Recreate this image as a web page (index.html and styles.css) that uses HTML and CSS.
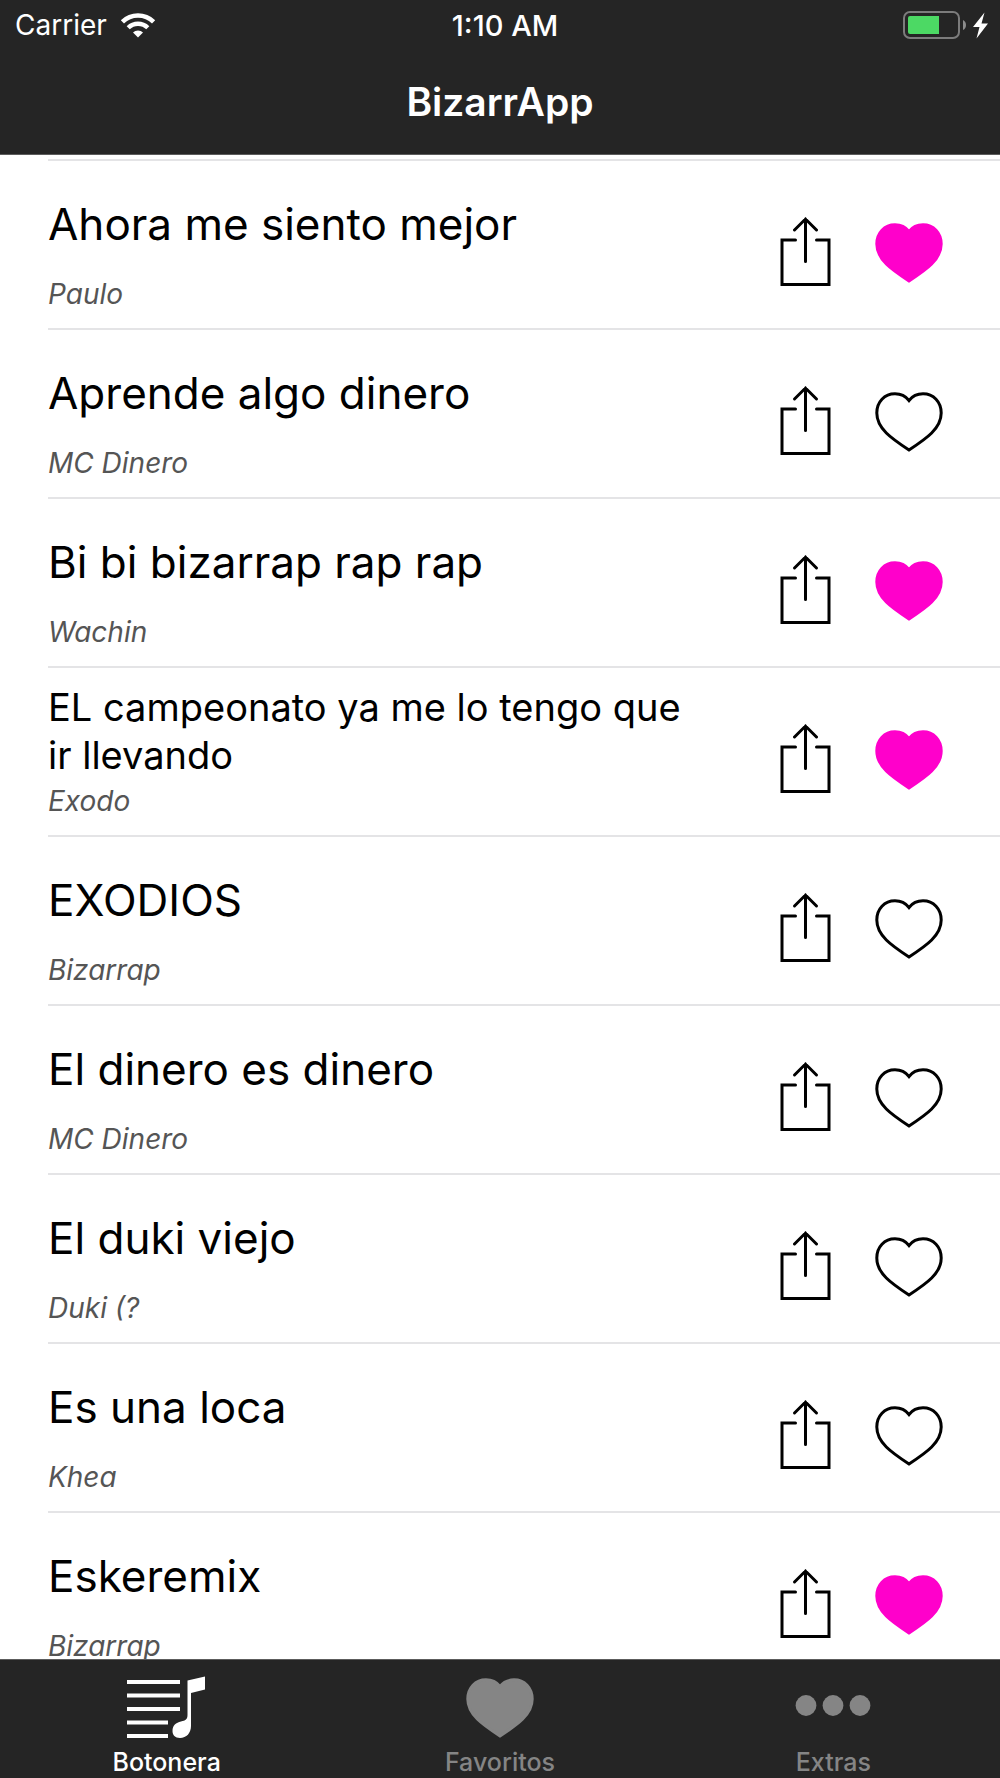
FILE: index.html
```html
<!DOCTYPE html>
<html lang="es">
<head>
<meta charset="utf-8">
<meta name="viewport" content="width=device-width, initial-scale=1">
<title>BizarrApp</title>
<link rel="stylesheet" href="styles.css">
</head>
<body>
<svg class="symbols" aria-hidden="true">
  <symbol id="share" viewBox="0 0 52 70">
    <path d="M15.500 24H2V68.500H49V24H36.500" fill="none" stroke="currentColor" stroke-width="3" stroke-linecap="round"/>
    <path d="M25.500 45.500V3M14.500 14L25.500 3L36.500 14" fill="none" stroke="currentColor" stroke-width="3" stroke-linecap="round"/>
  </symbol>
  <symbol id="heart" viewBox="0 0 70 70">
    <path d="M35 15.500C31.500 11 26.500 8.800 21 8.800C10.500 8.800 2.800 17 2.800 28C2.800 43.500 17.500 53.500 35 65C52.500 53.500 67.200 43.500 67.200 28C67.200 17 59.500 8.800 49 8.800C43.500 8.800 38.500 11 35 15.500Z" stroke="currentColor" stroke-width="3"/>
  </symbol>
</svg>
<div class="app">
  <header class="top">
    <div class="status">
      <div class="network">
        <span>Carrier</span>
        <svg width="36" height="26" viewBox="0 0 36 26" aria-hidden="true">
          <path d="M18 25.500L13 20.500A7 7 0 0 1 23 20.500Z" fill="#fff"/>
          <path d="M8.200 15.800A14 14 0 0 1 27.800 15.800" fill="none" stroke="#fff" stroke-width="4.400"/>
          <path d="M2.400 9.800A22.500 22.500 0 0 1 33.600 9.800" fill="none" stroke="#fff" stroke-width="4.600"/>
        </svg>
      </div>
      <time class="clock">1:10 AM</time>
      <svg class="power" width="86" height="28" viewBox="0 0 86 28" role="img" aria-label="Batería cargando">
        <rect x="1" y="1" width="55" height="26" rx="6" fill="none" stroke="#7c7c7c" stroke-width="2"/>
        <path d="M7 5H36V23H7Q5 23 5 21V7Q5 5 7 5Z" fill="#4cd964"/>
        <path d="M60 9Q63 10.500 63 14T60 19Z" fill="#8c8c8c"/>
        <path d="M81.500 1.500L70 16H76.500L73.500 27.500L85 12.500H78.500Z" fill="#fff"/>
      </svg>
    </div>
    <h1 class="heading">BizarrApp</h1>
  </header>

  <main class="content">
    <ul class="list">
      <li class="row">
        <div class="text"><div class="titlebox"><h2 class="title">Ahora me siento mejor</h2></div><p class="artist">Paulo</p></div>
        <div class="actions">
          <button class="share" aria-label="Compartir"><svg><use href="#share"/></svg></button>
          <button class="like on" aria-label="Favorito" aria-pressed="true"><svg><use href="#heart"/></svg></button>
        </div>
      </li>
      <li class="row">
        <div class="text"><div class="titlebox"><h2 class="title">Aprende algo dinero</h2></div><p class="artist">MC Dinero</p></div>
        <div class="actions">
          <button class="share" aria-label="Compartir"><svg><use href="#share"/></svg></button>
          <button class="like" aria-label="Favorito" aria-pressed="false"><svg><use href="#heart"/></svg></button>
        </div>
      </li>
      <li class="row">
        <div class="text"><div class="titlebox"><h2 class="title">Bi bi bizarrap rap rap</h2></div><p class="artist">Wachin</p></div>
        <div class="actions">
          <button class="share" aria-label="Compartir"><svg><use href="#share"/></svg></button>
          <button class="like on" aria-label="Favorito" aria-pressed="true"><svg><use href="#heart"/></svg></button>
        </div>
      </li>
      <li class="row">
        <div class="text"><div class="titlebox"><h2 class="title long">EL campeonato ya me lo tengo que ir llevando</h2></div><p class="artist">Exodo</p></div>
        <div class="actions">
          <button class="share" aria-label="Compartir"><svg><use href="#share"/></svg></button>
          <button class="like on" aria-label="Favorito" aria-pressed="true"><svg><use href="#heart"/></svg></button>
        </div>
      </li>
      <li class="row">
        <div class="text"><div class="titlebox"><h2 class="title">EXODIOS</h2></div><p class="artist">Bizarrap</p></div>
        <div class="actions">
          <button class="share" aria-label="Compartir"><svg><use href="#share"/></svg></button>
          <button class="like" aria-label="Favorito" aria-pressed="false"><svg><use href="#heart"/></svg></button>
        </div>
      </li>
      <li class="row">
        <div class="text"><div class="titlebox"><h2 class="title">El dinero es dinero</h2></div><p class="artist">MC Dinero</p></div>
        <div class="actions">
          <button class="share" aria-label="Compartir"><svg><use href="#share"/></svg></button>
          <button class="like" aria-label="Favorito" aria-pressed="false"><svg><use href="#heart"/></svg></button>
        </div>
      </li>
      <li class="row">
        <div class="text"><div class="titlebox"><h2 class="title">El duki viejo</h2></div><p class="artist">Duki (?</p></div>
        <div class="actions">
          <button class="share" aria-label="Compartir"><svg><use href="#share"/></svg></button>
          <button class="like" aria-label="Favorito" aria-pressed="false"><svg><use href="#heart"/></svg></button>
        </div>
      </li>
      <li class="row">
        <div class="text"><div class="titlebox"><h2 class="title">Es una loca</h2></div><p class="artist">Khea</p></div>
        <div class="actions">
          <button class="share" aria-label="Compartir"><svg><use href="#share"/></svg></button>
          <button class="like" aria-label="Favorito" aria-pressed="false"><svg><use href="#heart"/></svg></button>
        </div>
      </li>
      <li class="row">
        <div class="text"><div class="titlebox"><h2 class="title">Eskeremix</h2></div><p class="artist">Bizarrap</p></div>
        <div class="actions">
          <button class="share" aria-label="Compartir"><svg><use href="#share"/></svg></button>
          <button class="like on" aria-label="Favorito" aria-pressed="true"><svg><use href="#heart"/></svg></button>
        </div>
      </li>
    </ul>
  </main>

  <nav class="tabs">
    <a class="tab current" href="#botonera" aria-current="page">
      <svg width="82" height="64" viewBox="0 0 82 64" aria-hidden="true">
        <path d="M1 6H54M1 19.500H54M1 33H54M1 46.500H42M1 60H42" stroke="currentColor" stroke-width="4"/>
        <path d="M61.500 4.500L79 0.500V13.500L65 17V50C65 57 60.500 62 54 62C49 62 46.500 59 46.500 55C46.500 49.500 50 46.500 55 45.500C59.500 44.500 61.500 43.500 61.500 39Z" fill="currentColor"/>
      </svg>
      <span>Botonera</span>
    </a>
    <a class="tab" href="#favoritos">
      <svg class="filled" width="70" height="64" viewBox="0 5 70 64" aria-hidden="true"><use href="#heart" width="70" height="70"/></svg>
      <span>Favoritos</span>
    </a>
    <a class="tab" href="#extras">
      <svg width="76" height="64" viewBox="0 0 76 64" fill="currentColor" aria-hidden="true">
        <circle cx="11" cy="29.500" r="10.400"/><circle cx="38" cy="29.500" r="10.400"/><circle cx="65" cy="29.500" r="10.400"/>
      </svg>
      <span>Extras</span>
    </a>
  </nav>
</div>
</body>
</html>
```
FILE: styles.css
```css
* {
  box-sizing: border-box;
}

body {
  margin: 0;
  background: #fff;
  color: #000;
  font-family: Inter, "Liberation Sans", sans-serif;
}

.symbols {
  display: none;
}

.app {
  display: flex;
  flex-direction: column;
  height: 100vh;
}

/* Header */
.top {
  flex: none;
  background: #252525;
  border-bottom: 1px solid #5c5c5c;
  color: #fff;
}

.status {
  display: grid;
  grid-template-columns: 1fr auto 1fr;
  align-items: center;
  height: 50px;
  padding: 0 11px 0 15px;
  font-size: 28px;
}

.network {
  display: flex;
  align-items: center;
  gap: 13px;
}

.clock {
  padding-left: 6px;
  font-size: 29px;
  font-weight: 500;
}

.power {
  justify-self: end;
}

.heading {
  margin: 0;
  padding: 28px 0;
  font-size: 39px;
  font-weight: 600;
  line-height: 48px;
  text-align: center;
}

/* Sound list */
.content {
  flex: 1;
  min-height: 0;
  overflow-y: auto;
  scrollbar-width: none;
}

.list {
  margin: 4px 0 0;
  padding: 0 0 0 48px;
  list-style: none;
}

.row {
  display: flex;
  align-items: center;
  gap: 70px;
  padding-right: 56px;
  border-bottom: 2px solid #e4e4e6;
}

.row:first-child {
  border-top: 2px solid #e4e4e6;
}

.text {
  flex: 1;
  min-width: 0;
  padding: 15px 0 12px;
}

.titlebox {
  display: flex;
  align-items: center;
  min-height: 96px;
}

.title {
  margin: 0;
  font-size: 44px;
  font-weight: 400;
  line-height: 48px;
}

.title.long {
  font-size: 38px;
}

.artist {
  margin: 0;
  color: #555;
  font-size: 28px;
  font-style: italic;
  line-height: 44px;
}

.actions {
  display: flex;
  gap: 42px;
  padding-top: 12px;
}

.share,
.like {
  display: block;
  padding: 0;
  border: 0;
  background: none;
  color: #000;
  cursor: pointer;
}

.share svg,
.like svg {
  display: block;
  width: 52px;
  height: 70px;
}

.like svg {
  width: 70px;
  fill: none;
}

.like.on {
  color: #ff00cb;
}

.like.on svg,
.filled {
  fill: currentColor;
}

/* Tab bar */
.tabs {
  display: grid;
  flex: none;
  grid-template-columns: repeat(3, 1fr);
  background: #252525;
  border-top: 1px solid #5c5c5c;
}

.tab {
  display: flex;
  flex-direction: column;
  align-items: center;
  gap: 7px;
  padding: 16px 0 1px;
  color: #858585;
  font-size: 25px;
  font-weight: 500;
  line-height: 30px;
  text-decoration: none;
}

.tab.current {
  color: #fff;
}
```
